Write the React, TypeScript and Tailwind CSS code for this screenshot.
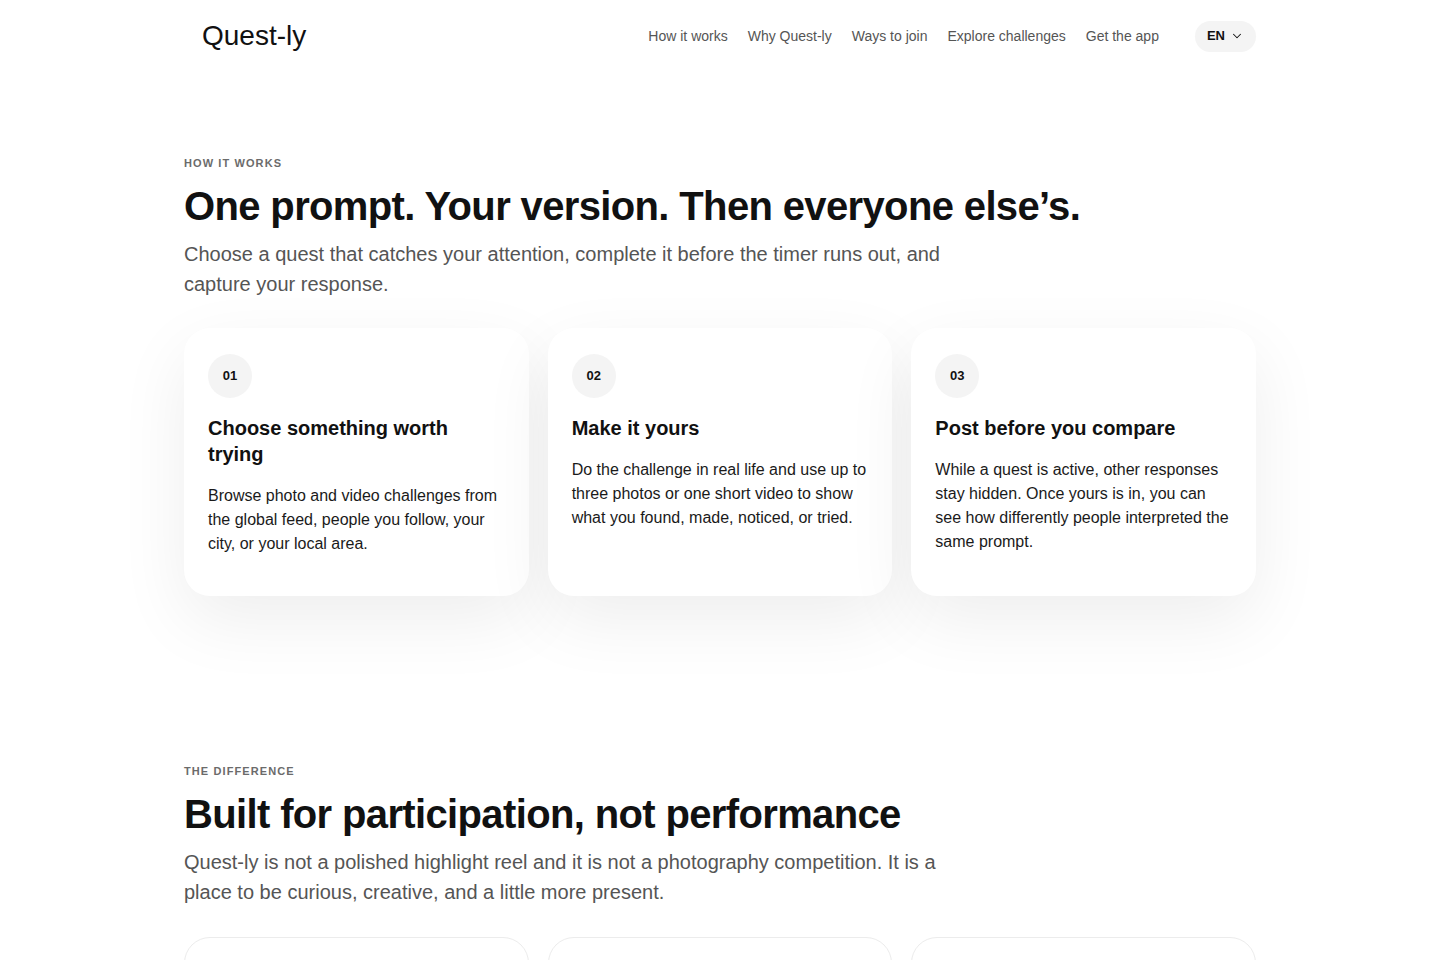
import React from 'react';
import { ChevronDown } from 'lucide-react';

const steps = [
  {
    n: '01',
    title: 'Choose something worth trying',
    body: 'Browse photo and video challenges from the global feed, people you follow, your city, or your local area.',
  },
  {
    n: '02',
    title: 'Make it yours',
    body: 'Do the challenge in real life and use up to three photos or one short video to show what you found, made, noticed, or tried.',
  },
  {
    n: '03',
    title: 'Post before you compare',
    body: 'While a quest is active, other responses stay hidden. Once yours is in, you can see how differently people interpreted the same prompt.',
  },
];

const links = ['How it works', 'Why Quest-ly', 'Ways to join', 'Explore challenges', 'Get the app'];

function SectionHead({ label, title, text }: { label: string; title: string; text: string }) {
  return (
    <div>
      <p className="text-[11px] font-bold tracking-[0.1em] uppercase text-[#6b6b6b] leading-4">{label}</p>
      <h2 className="mt-[11px] text-[40px] font-bold leading-[48px] tracking-[-0.016em] text-[#111]">{title}</h2>
      <p className="mt-[9px] max-w-[780px] text-[20px] leading-[30px] text-[#555]">{text}</p>
    </div>
  );
}

export default function App() {
  return (
    <div className="min-h-screen bg-white text-[#111]" style={{ fontFamily: '"Liberation Sans", Arial, sans-serif' }}>
      <header className="mx-auto flex h-[72px] w-[1072px] items-center justify-between">
        <a className="pl-[18px] text-[28px] leading-none text-[#111]">Quest-ly</a>
        <nav className="flex items-center">
          <ul className="flex items-center gap-5 text-[14px] text-[#555]">
            {links.map((l) => (
              <li key={l}>{l}</li>
            ))}
          </ul>
          <button className="ml-9 flex h-[31px] items-center gap-[5px] rounded-full bg-[#f4f4f4] px-3 text-[13px] font-bold text-[#111]">
            EN
            <ChevronDown className="h-[14px] w-[14px]" strokeWidth={1.75} />
          </button>
        </nav>
      </header>

      <main className="mx-auto w-[1072px]">
        <section className="pt-[83px]">
          <SectionHead
            label="How it works"
            title="One prompt. Your version. Then everyone else’s."
            text="Choose a quest that catches your attention, complete it before the timer runs out, and capture your response."
          />
          <div className="mt-[29px] grid grid-cols-3 gap-[19px]">
            {steps.map((s) => (
              <div
                key={s.n}
                className="rounded-[26px] bg-white px-6 pt-[26px] pb-10 shadow-[0_24px_70px_rgba(0,0,0,0.07)]"
              >
                <div className="flex h-11 w-11 items-center justify-center rounded-full bg-[#f4f4f4] text-[13px] font-bold">
                  {s.n}
                </div>
                <h3 className="mt-[17px] text-[20px] font-bold leading-[26px] text-[#111]">{s.title}</h3>
                <p className="mt-[17px] text-[16px] leading-6 text-[#1a1a1a]">{s.body}</p>
              </div>
            ))}
          </div>
        </section>

        <section className="pt-[167px]">
          <SectionHead
            label="The difference"
            title="Built for participation, not performance"
            text="Quest-ly is not a polished highlight reel and it is not a photography competition. It is a place to be curious, creative, and a little more present."
          />
          <div className="mt-[30px] grid grid-cols-3 gap-[19px]">
            {[0, 1, 2].map((i) => (
              <div key={i} className="h-[200px] rounded-[26px] border border-[#ececec] bg-white" />
            ))}
          </div>
        </section>
      </main>
    </div>
  );
}
